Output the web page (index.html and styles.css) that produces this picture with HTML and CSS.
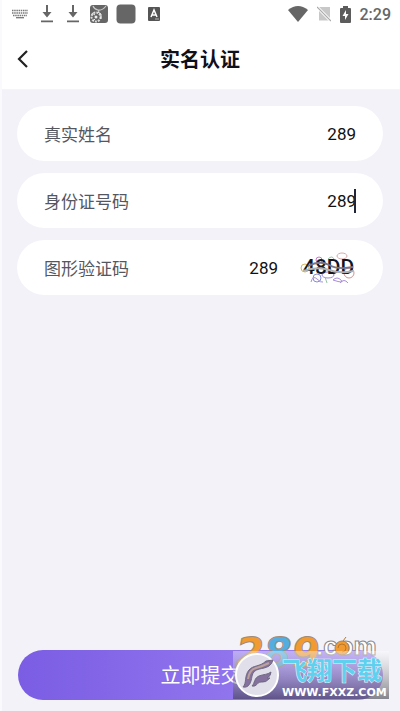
FILE: index.html
```html
<!DOCTYPE html>
<html lang="zh-CN">
<head>
    <meta charset="UTF-8">
    <meta name="viewport" content="width=device-width, initial-scale=1.0">
    <title>实名认证</title>
    <link rel="stylesheet" href="styles.css">
</head>
<body>
<div class="top">
    <div class="status-bar">
        <div class="status-left">
            <svg width="16" height="10" viewBox="0 0 16 10" fill="none" stroke="#777">
                <path d="M0 1.5h16M0 4h16M1 6.5h14" stroke-width="1.3" stroke-dasharray="1.5 .7"/>
                <path d="M4 8.7h8" stroke-width="1.3"/>
            </svg>
            <svg width="14" height="18" viewBox="0 0 14 18" fill="#666">
                <path d="M6 0h2v7h3.500L7 12.500 2.500 7H6zM1 15.500h12v1.800H1z"/>
            </svg>
            <svg width="14" height="18" viewBox="0 0 14 18" fill="#666">
                <path d="M6 0h2v7h3.500L7 12.500 2.500 7H6zM1 15.500h12v1.800H1z"/>
            </svg>
            <div class="apps">
                <svg width="18" height="18" viewBox="0 0 18 18" fill="none">
                    <rect width="18" height="18" rx="3" fill="#666"/>
                    <path d="M3 1q1 3 5 4t8-4M8 5l1 2" stroke="#ccc" stroke-width="1.1"/>
                    <circle cx="6" cy="12" r="4.500" stroke="#ddd" stroke-width="2" stroke-dasharray="2 1"/>
                    <circle cx="6" cy="12" r="1.500" fill="#eee"/>
                    <path d="M2 8l3 2M8 7l3 2v5M3 16l2-2" stroke="#eee"/>
                </svg>
                <svg width="20" height="20" viewBox="0 0 20 20">
                    <rect x=".5" y=".5" width="19" height="19" rx="4" fill="#666"/>
                </svg>
            </div>
            <svg width="12" height="14" viewBox="0 0 12 14">
                <rect width="12" height="14" rx="1" fill="#555"/>
                <path d="M3 10l3-7 3 7M4 8h4" fill="none" stroke="#fff" stroke-width="1.500"/>
                <path d="M7 12h4" stroke="#ccc" stroke-width=".8"/>
            </svg>
        </div>
        <div class="status-right">
            <svg width="20" height="16" viewBox="0 0 20 16" fill="#666">
                <path d="M0 4Q10-4 20 4L10 16z"/>
            </svg>
            <svg width="14" height="16" viewBox="0 0 14 16">
                <path d="M2 1h11v13.500H2z" fill="#c8c8c8"/>
                <path d="M0 1l14 14" stroke="#fff" stroke-width="3"/>
                <path d="M0 1l14 14" stroke="#aaa" stroke-width="1.200"/>
            </svg>
            <svg width="11" height="17" viewBox="0 0 11 17">
                <path d="M3 0h5v2h2q1 0 1 1v13q0 1-1 1H1q-1 0-1-1V3q0-1 1-1h2z" fill="#5c5c5c"/>
                <path d="M6 4L2.500 10H5v4l3.500-6H6z" fill="#fff"/>
            </svg>
            <span class="clock">2:29</span>
        </div>
    </div>
    <header class="nav">
        <button class="back" type="button" aria-label="返回">
            <svg width="12" height="18" viewBox="0 0 12 18" fill="none" stroke="#222" stroke-width="2.200">
                <path d="M10 1L2 9l8 8"/>
            </svg>
        </button>
        <h1>实名认证</h1>
    </header>
</div>

<form class="form" id="authForm">
    <div class="row">
        <label for="realName">真实姓名</label>
        <input type="text" id="realName" value="289">
    </div>
    <div class="row">
        <label for="idNumber">身份证号码</label>
        <div class="field">
            <input type="text" id="idNumber" value="289">
            <span class="caret"></span>
        </div>
    </div>
    <div class="row">
        <label for="captcha">图形验证码</label>
        <input type="text" id="captcha" value="289">
        <svg class="captcha" width="56" height="34" viewBox="0 0 56 34" fill="none">
            <g stroke-width="1">
                <ellipse cx="42" cy="5" rx="5" ry="3" stroke="#d9aaa9"/>
                <circle cx="19" cy="9" r="3" stroke="#c679cb"/>
                <circle cx="5" cy="17" r="4" stroke="#d5b75d"/>
                <ellipse cx="28" cy="24" rx="6" ry="3" stroke="#9c86da"/>
                <circle cx="49" cy="22" r="5" stroke="#d59090"/>
                <circle cx="17" cy="27" r="4" stroke="#858ed4"/>
                <path d="M11 31q2-7 6-3t6 3M33 29q4-4 8 0t-8 0M40 32q4-5 8 0" stroke="#a98fda"/>
                <path d="M28 8q4-4 6 0M25 26l2 6" stroke="#92c7a2"/>
            </g>
            <text x="3" y="23" class="captcha-text">48DD</text>
            <path d="M8 15q12-6 21-1t24 2" stroke="#77758b" stroke-width="1.800"/>
            <path d="M3 20q15-5 26-1t24 1" stroke="#b0b0b0" stroke-width="2"/>
        </svg>
    </div>
</form>

<footer class="footer">
    <button class="submit" type="submit" form="authForm">立即提交</button>
    <svg class="watermark" width="158" height="66" viewBox="0 0 158 66">
        <defs>
            <linearGradient id="shade" x1="0" y1="0" x2="0" y2="1">
                <stop offset="0" stop-color="#fff" stop-opacity=".4"/>
                <stop offset="1" stop-color="#3c3c46" stop-opacity=".6"/>
            </linearGradient>
        </defs>
        <text x="3" y="34" class="brand">2<tspan class="blue">8</tspan>9</text>
        <text x="83" y="22" class="brand-com">.com</text>
        <circle cx="109" cy="15" r="7" fill="#f19a32" stroke="#a78258"/>
        <path d="M105 15a4 4 0 1 1 4 4M110 8l3-4" fill="none" stroke="#b8772a"/>
        <rect y="18" width="156" height="48" fill="url(#shade)"/>
        <circle cx="24" cy="42" r="21" fill="#e1dfe9" stroke="#fff" stroke-width="2"/>
        <path d="M10 54C14 50 11 43 16 37C20 32 27 34 33 28L40 27Q39 31 36 33C30 37 21 34 19 43C18 50 16 55 10 54z" fill="#84719e" stroke="#706982"/>
        <path d="M19 53C22 50 21 45 26 43C31 41 34 42 38 39Q38 43 34 45L37 45Q33 50 28 49C24 49 24 54 19 53z" fill="#84719e" stroke="#706982"/>
        <path d="M15 46q1-9 8-11t13-5" fill="none" stroke="#bca29a" stroke-width="2"/>
        <text x="49" y="47" class="mark-name">飞翔下载</text>
        <text x="49" y="63" class="mark-url">WWW.FXXZ.COM</text>
    </svg>
</footer>
</body>
</html>
```
FILE: styles.css
```css
* {
    box-sizing: border-box;
    margin: 0;
    padding: 0;
}

body {
    min-height: 100vh;
    display: flex;
    flex-direction: column;
    font-family: Roboto, "Noto Sans CJK SC", sans-serif;
    background: #f2f2f8;
    border-left: 2px solid #fafafc;
}

button, input {
    border: none;
    outline: none;
    background: none;
    font: inherit;
}

.top {
    background: #fff;
    border-bottom: 1px solid #f5f5f5;
}

.status-bar {
    height: 28px;
    padding: 0 9px 0 10px;
    display: flex;
    justify-content: space-between;
    align-items: center;
}

.status-left {
    display: flex;
    align-items: center;
    gap: 12px;
}

.apps {
    display: flex;
    align-items: center;
    gap: 8px;
    margin-left: -2px;
}

.status-right {
    display: flex;
    align-items: center;
    gap: 9px;
}

.clock {
    font-size: 16px;
    font-weight: 500;
    color: #666;
}

.nav {
    height: 61px;
    padding: 0 16px 0 14px;
    display: grid;
    grid-template-columns: 24px 1fr 24px;
    align-items: center;
}

.back {
    height: 24px;
    padding-left: 1px;
    display: flex;
    align-items: center;
    cursor: pointer;
}

.nav h1 {
    font-size: 20px;
    font-weight: 700;
    text-align: center;
    color: #10101c;
}

.form {
    flex: 1;
    padding: 16px 17px 16px 15px;
    display: flex;
    flex-direction: column;
    gap: 12px;
}

.row {
    height: 55px;
    padding: 0 27px;
    display: flex;
    align-items: center;
    background: #fff;
    border-radius: 28px;
}

.row label {
    flex-shrink: 0;
    font-size: 17px;
    color: #55575f;
}

.row input {
    flex: 1;
    min-width: 0;
    width: 100%;
    font-size: 17px;
    text-align: right;
    color: #111;
}

.field {
    flex: 1;
    position: relative;
    display: flex;
    align-items: center;
}

.caret {
    position: absolute;
    right: 0;
    width: 2px;
    height: 24px;
    background: #202638;
}

.captcha {
    margin-left: 22px;
}

.captcha-text {
    font: 500 21px Roboto, sans-serif;
    fill: #151520;
}

.footer {
    position: relative;
    padding: 0 17px 11px 16px;
}

.submit {
    width: 100%;
    height: 50px;
    padding-bottom: 2px;
    border-radius: 25px;
    background: linear-gradient(90deg, #7a5de3, #a085f5);
    font-size: 20px;
    color: #fff;
    cursor: pointer;
}

.watermark {
    position: absolute;
    right: 9px;
    bottom: 12px;
}

.brand {
    font: italic 700 40px "DejaVu Sans", sans-serif;
    fill: #f19a32;
    stroke: #a08a78;
}

.blue {
    fill: #54ade0;
}

.brand-com {
    font: 700 26px "Liberation Sans", sans-serif;
    fill: #fff;
    stroke: #888;
}

.mark-name {
    font: 700 25px "Noto Sans CJK SC", sans-serif;
    fill: #5fd0ee;
    stroke: #e4f6fc;
    stroke-width: 1px;
    paint-order: stroke;
}

.mark-url {
    font: 700 11px "DejaVu Sans", sans-serif;
    fill: #fff;
}
```
